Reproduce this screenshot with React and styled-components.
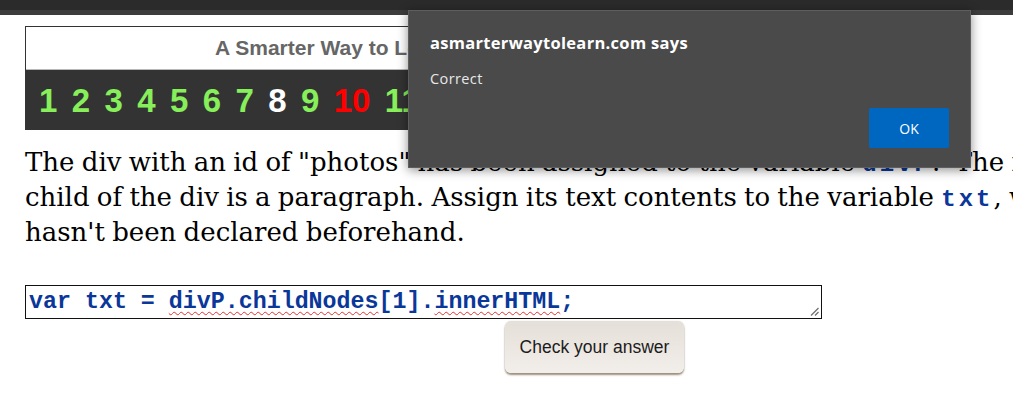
import React from 'react';
import styled, { createGlobalStyle } from 'styled-components';

const GlobalStyle = createGlobalStyle`
    html, body {
        margin: 0;
        padding: 0;
        background: #ffffff;
        overflow: hidden;
    }
`;

const numbers = [
    { n: 1, c: 'green' }, { n: 2, c: 'green' }, { n: 3, c: 'green' },
    { n: 4, c: 'green' }, { n: 5, c: 'green' }, { n: 6, c: 'green' },
    { n: 7, c: 'green' }, { n: 8, c: 'white' }, { n: 9, c: 'green' },
    { n: 10, c: 'red' }, { n: 11, c: 'green' }, { n: 12, c: 'green' },
    { n: 13, c: 'green' }, { n: 14, c: 'green' }, { n: 15, c: 'green' },
];

const digitColors = {
    green: '#86ef5a',
    white: '#ffffff',
    red: '#ff0000',
};

const App = () => {
    return (
        <>
            <GlobalStyle />
            <Screen>
                <BrowserBar />
                <BarEdge />

                <Page>
                    {/* Banner image */}
                    <Banner>
                        <BannerTitle>A Smarter Way to Learn JavaScript</BannerTitle>
                        <NumberStrip>
                            {numbers.map((item) => (
                                <Digit key={item.n} tone={item.c}>{item.n}</Digit>
                            ))}
                        </NumberStrip>
                    </Banner>

                    <Question>
                        <Line>The div with an id of "photos" has been assigned to the variable <Code>divP</Code>.  The first</Line>
                        <Line>child of the div is a paragraph. Assign its text contents to the variable <Code>txt</Code>, which</Line>
                        <Line>hasn't been declared beforehand.</Line>
                    </Question>

                    <AnswerBox>
                        var txt = <Misspelled>divP.childNodes</Misspelled>[1].<Misspelled>innerHTML</Misspelled>;
                        <Grip width="9" height="9" viewBox="0 0 9 9">
                            <line x1="1" y1="8.5" x2="8.5" y2="1" stroke="#707070" strokeWidth="1.2" />
                            <line x1="5" y1="8.5" x2="8.5" y2="5" stroke="#707070" strokeWidth="1.2" />
                        </Grip>
                    </AnswerBox>

                    <CheckButton>Check your answer</CheckButton>
                </Page>

                {/* Browser alert */}
                <Alert>
                    <AlertTitle>asmarterwaytolearn.com says</AlertTitle>
                    <AlertMessage>Correct</AlertMessage>
                    <OkButton>OK</OkButton>
                </Alert>
            </Screen>
        </>
    )
}

export default App;

const Screen = styled.div`
    position: relative;
    width: 1013px;
    height: 402px;
    overflow: hidden;
    background: #ffffff;
`;

const BrowserBar = styled.div`
    height: 10px;
    background: #2b2b2b;
`;

const BarEdge = styled.div`
    height: 5px;
    background: #3c3c3c;
`;

const Page = styled.div`
    padding: 11px 0 0 25px;
    display: flex;
    flex-direction: column;
    align-items: flex-start;
`;

const Banner = styled.div`
    width: 760px;
    border: 1px solid #333333;
    border-bottom: none;
    display: flex;
    flex-direction: column;
`;

const BannerTitle = styled.div`
    height: 43px;
    box-sizing: border-box;
    padding-left: 189px;
    border-bottom: 1px solid #b8b8b8;
    display: flex;
    align-items: center;
    font-family: "Liberation Sans", Arial, sans-serif;
    font-weight: bold;
    font-size: 21px;
    color: #666666;
    white-space: nowrap;
`;

const NumberStrip = styled.div`
    height: 60px;
    background: #333333;
    display: flex;
    align-items: center;
    gap: 14.4px;
    padding-left: 13px;
    overflow: hidden;
`;

const Digit = styled.span`
    font-family: "Liberation Sans", Arial, sans-serif;
    font-weight: bold;
    font-size: 33px;
    line-height: 1;
    color: ${(p) => digitColors[p.tone]};
`;

const Question = styled.div`
    margin-top: 16px;
    font-family: "DejaVu Serif", Georgia, serif;
    font-size: 26px;
    line-height: 33px;
    word-spacing: -1px;
    color: #000000;
`;

const Line = styled.div`
    white-space: pre;
`;

const Code = styled.code`
    font-family: "Liberation Mono", "Courier New", monospace;
    font-weight: bold;
    font-size: 24px;
    letter-spacing: 3px;
    word-spacing: 0;
    color: #0a3799;
`;

const AnswerBox = styled.div`
    position: relative;
    margin-top: 36px;
    width: 797px;
    height: 34px;
    box-sizing: border-box;
    border: 1px solid #111111;
    padding: 2px 0 0 3px;
    font-family: "Liberation Mono", "Courier New", monospace;
    font-weight: bold;
    font-size: 23.3px;
    line-height: 28px;
    color: #0a3799;
    white-space: pre;
`;

const Misspelled = styled.span`
    text-decoration: underline wavy #e23030;
    text-decoration-thickness: 1px;
    text-underline-offset: 3px;
`;

const Grip = styled.svg`
    position: absolute;
    right: 2px;
    bottom: 2px;
`;

const CheckButton = styled.button`
    margin: 2px 0 0 480px;
    width: 179px;
    height: 52px;
    border: none;
    border-radius: 6px;
    background: linear-gradient(#e5dfd9, #f2eee9);
    box-shadow: 0 2px 2px #9c8e7e, 0 0 1px rgba(120, 100, 80, 0.4);
    font-family: "Liberation Sans", Arial, sans-serif;
    font-size: 17.5px;
    color: #1c1c1c;
    cursor: pointer;
`;

const Alert = styled.div`
    position: absolute;
    left: 408px;
    top: 10px;
    width: 563px;
    height: 158px;
    box-sizing: border-box;
    background: #4a4a4a;
    border: 1px solid #5e5e5e;
    box-shadow: 0 2px 10px rgba(0, 0, 0, 0.45);
    padding: 21px 21px 19px 21px;
    display: flex;
    flex-direction: column;
    align-items: flex-start;
`;

const AlertTitle = styled.div`
    font-family: "Open Sans", "Noto Sans", sans-serif;
    font-weight: bold;
    font-size: 16.5px;
    letter-spacing: 0.3px;
    line-height: 22px;
    color: #ffffff;
`;

const AlertMessage = styled.div`
    margin-top: 15px;
    font-family: "Open Sans", "Noto Sans", sans-serif;
    font-size: 14.5px;
    letter-spacing: 0.4px;
    line-height: 20px;
    color: #e8e8e8;
`;

const OkButton = styled.button`
    margin-top: auto;
    align-self: flex-end;
    width: 80px;
    height: 40px;
    border: none;
    border-radius: 2px;
    background: #0067c0;
    font-family: "Open Sans", "Noto Sans", sans-serif;
    font-size: 14px;
    color: #ffffff;
`;
